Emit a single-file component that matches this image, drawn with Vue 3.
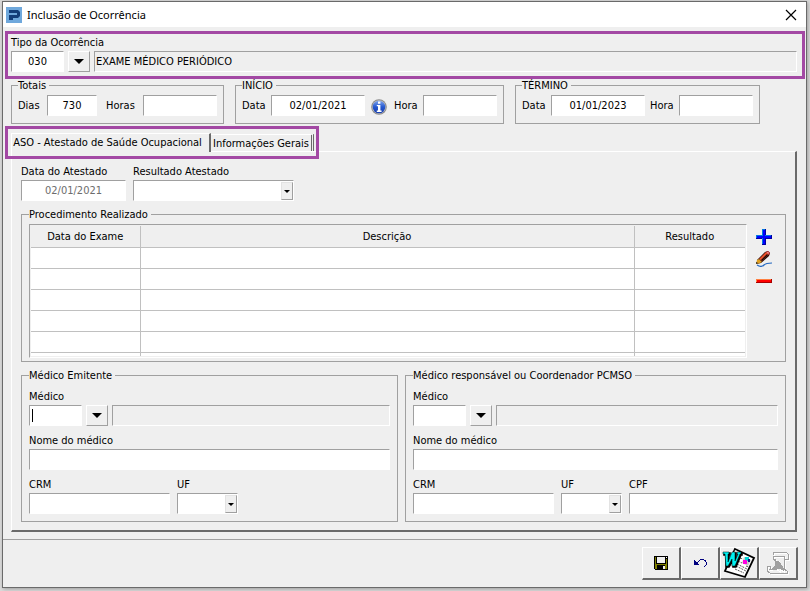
<script setup>
import { ref, onMounted } from 'vue'

const tipo = ref({ codigo: '030', descricao: 'EXAME MÉDICO PERIÓDICO' })
const totais = ref({ dias: '730', horas: '' })
const inicio = ref({ data: '02/01/2021', hora: '' })
const termino = ref({ data: '01/01/2023', hora: '' })
const dataAtestado = ref('02/01/2021')
const resultado = ref('')

const abas = ['ASO - Atestado de Saúde Ocupacional', 'Informações Gerais']
const abaAtiva = ref(0)

const medicos = ref([
  { id: 'emitente', titulo: 'Médico Emitente', cpf: false },
  { id: 'coordenador', titulo: 'Médico responsável ou Coordenador PCMSO', cpf: true }
])

const linhas = 6

onMounted(() => {
  document.getElementById('emitente-codigo')?.focus()
})
</script>

<template>
  <main class="window">
    <header class="titlebar">
      <svg class="logo" viewBox="0 0 16 16" aria-hidden="true">
        <rect width="16" height="16" fill="#6fa8dc" />
        <path d="M3 3h9l2 2v4l-2 2H7v2H3V8h8V6H3z" fill="#123c78" />
      </svg>
      <h1>Inclusão de Ocorrência</h1>
      <button type="button" class="close" aria-label="Fechar">
        <svg viewBox="0 0 12 12"><path d="M1 1l10 10M11 1L1 11" stroke="#000" stroke-width="1.2" fill="none" /></svg>
      </button>
    </header>

    <div class="content">
      <section class="tipo">
        <label for="tipo-codigo">Tipo da Ocorrência</label>
        <div class="lookup">
          <input id="tipo-codigo" v-model="tipo.codigo" class="field code center" />
          <button type="button" class="arrow" aria-label="Pesquisar tipo"></button>
          <input v-model="tipo.descricao" class="field readonly" readonly aria-label="Descrição do tipo" />
        </div>
      </section>

      <div class="periods">
        <fieldset class="period totals">
          <legend>Totais</legend>
          <label for="dias">Dias</label>
          <input id="dias" v-model="totais.dias" class="field days center" />
          <label for="horas" class="hours">Horas</label>
          <input id="horas" v-model="totais.horas" class="field hour" />
        </fieldset>
        <fieldset class="period">
          <legend>INÍCIO</legend>
          <label for="inicio-data">Data</label>
          <input id="inicio-data" v-model="inicio.data" class="field date center" />
          <button type="button" class="info" aria-label="Informações">
            <svg viewBox="0 0 16 16">
              <defs>
                <linearGradient id="infoBlue" x1="0" y1="0" x2="0" y2="1">
                  <stop offset="0" stop-color="#7fa4ee" />
                  <stop offset="0.5" stop-color="#2558cf" />
                  <stop offset="1" stop-color="#1a3fae" />
                </linearGradient>
              </defs>
              <circle cx="8" cy="8" r="7.8" fill="#8a8a8a" />
              <circle cx="8" cy="8" r="6.8" fill="#c4c4c4" />
              <circle cx="8" cy="8" r="6.3" fill="url(#infoBlue)" />
              <path d="M7 2.6h2.4v2.2H7zM5.8 6h3.6v5.6h1.2V13H5.8v-1.4H7V7.2H5.8z" fill="#fff" />
            </svg>
          </button>
          <label for="inicio-hora">Hora</label>
          <input id="inicio-hora" v-model="inicio.hora" class="field hour" />
        </fieldset>
        <fieldset class="period end">
          <legend>TÉRMINO</legend>
          <label for="termino-data">Data</label>
          <input id="termino-data" v-model="termino.data" class="field date center" />
          <label for="termino-hora" class="next">Hora</label>
          <input id="termino-hora" v-model="termino.hora" class="field hour" />
        </fieldset>
      </div>

      <div class="tabs" role="tablist">
        <button
          v-for="(aba, i) in abas"
          :key="aba"
          type="button"
          role="tab"
          class="tab"
          :class="{ active: abaAtiva === i }"
          :aria-selected="abaAtiva === i"
          @click="abaAtiva = i"
        >{{ aba }}</button>
      </div>

      <section class="panel">
        <div class="row atestado">
          <div class="cell">
            <label for="data-atestado">Data do Atestado</label>
            <input id="data-atestado" v-model="dataAtestado" class="field attest center" disabled />
          </div>
          <div class="cell">
            <label for="resultado">Resultado Atestado</label>
            <div class="combo wide">
              <select id="resultado" v-model="resultado"><option value=""></option></select>
            </div>
          </div>
        </div>

        <fieldset class="exams">
          <legend>Procedimento Realizado</legend>
          <div class="grid">
            <table>
              <thead>
                <tr>
                  <th class="col-date">Data do Exame</th>
                  <th>Descrição</th>
                  <th class="col-result">Resultado</th>
                </tr>
              </thead>
              <tbody>
                <tr v-for="n in linhas" :key="n" :class="{ partial: n === linhas }">
                  <td></td>
                  <td></td>
                  <td></td>
                </tr>
              </tbody>
            </table>
          </div>
          <div class="actions">
            <button type="button" aria-label="Adicionar">
              <svg viewBox="0 0 16 16" shape-rendering="crispEdges">
                <path d="M6 0h4v6h6v4h-6v6H6v-6H0V6h6z" fill="#0000a0" />
                <path d="M6 0h3v6h6v3H9v6H6V9H0V6h6z" fill="#0078e0" />
                <path d="M7 1h2v6h6v2H9v6H7V9H1V7h6z" fill="#0000ff" />
              </svg>
            </button>
            <button type="button" aria-label="Editar">
              <svg viewBox="0 0 16 16">
                <path d="M1 9L9 1l3-1 2 2-1 3-8 7-4 1z" fill="#2a0805" />
                <path d="M3 8l7-7 2 0 1 2-7 7z" fill="#e8502c" />
                <path d="M5 9l6-6 1 1-6 6z" fill="#1c0a08" />
                <path d="M10 1l2-1 2 2-1 2z" fill="#c42c34" />
                <path d="M11 1l1 0 1 1-1 1z" fill="#f7b3b0" />
                <path d="M0 13l1-4 2-1 3 3-2 1z" fill="#e0a020" />
                <path d="M0 13v-2l2 1z" fill="#222" />
                <path d="M1 14c3 2 5 2 7 0s4-2 8-2" stroke="#2468c0" stroke-width="1.2" fill="none" />
              </svg>
            </button>
            <button type="button" aria-label="Remover">
              <svg viewBox="0 0 16 16" shape-rendering="crispEdges">
                <path d="M0 6h16v4H0z" fill="#a80000" />
                <path d="M0 6h15v3H0z" fill="#ff8040" />
                <path d="M1 7h14v2H1z" fill="#ff0000" />
              </svg>
            </button>
          </div>
        </fieldset>

        <div class="doctors">
          <fieldset v-for="m in medicos" :key="m.id" class="doctor">
            <legend>{{ m.titulo }}</legend>
            <div class="cell">
              <label :for="m.id + '-codigo'">Médico</label>
              <div class="lookup">
                <input :id="m.id + '-codigo'" class="field code" />
                <button type="button" class="arrow" aria-label="Pesquisar médico"></button>
                <input class="field readonly" readonly aria-label="Médico selecionado" />
              </div>
            </div>
            <div class="cell">
              <label :for="m.id + '-nome'">Nome do médico</label>
              <input :id="m.id + '-nome'" class="field" />
            </div>
            <div class="row">
              <div class="cell">
                <label :for="m.id + '-crm'">CRM</label>
                <input :id="m.id + '-crm'" class="field crm" />
              </div>
              <div class="cell">
                <label :for="m.id + '-uf'">UF</label>
                <div class="combo">
                  <select :id="m.id + '-uf'"><option value=""></option></select>
                </div>
              </div>
              <div v-if="m.cpf" class="cell grow">
                <label :for="m.id + '-cpf'">CPF</label>
                <input :id="m.id + '-cpf'" class="field" />
              </div>
            </div>
          </fieldset>
        </div>
      </section>
    </div>

    <footer class="toolbar">
      <button type="button" aria-label="Salvar">
        <svg width="14" height="14" viewBox="0 0 14 14" shape-rendering="crispEdges">
          <path d="M0 0h14v14H1l-1-1z" fill="#000" />
          <path d="M1 1h1v7h10V3h1v10H1z" fill="#808000" />
          <path d="M3 1h8v6H3z" fill="#efefef" />
          <path d="M12 1h1v1h-1z" fill="#fff" />
          <path d="M3 9h8v5H3z" fill="#000" />
          <path d="M9 10h2v3H9z" fill="#efefef" />
        </svg>
      </button>
      <button type="button" aria-label="Desfazer">
        <svg width="14" height="14" viewBox="0 0 14 14" shape-rendering="crispEdges">
          <path d="M1 4h1v1h1v1h1v1h1v1h1v1H1z" fill="#000080" />
          <path d="M4 6h1V5h1V4h1V3h4v1h2v2h1v3h-1v1h-1v1h-1v-1h1V9h1V6h-1V5h-1V4H7v1H6v1H5v1H4z" fill="#000080" />
        </svg>
      </button>
      <button type="button" aria-label="Gerar documento">
        <svg width="34" height="32" viewBox="0 0 34 32">
          <path d="M13 2l19 9-9 19-20-6z" fill="#fff" stroke="#000" stroke-width="1.8" />
          <path d="M13 3l7 4-6 14-7-2z" fill="#d8d8d8" />
          <path d="M18 11l3 1M16 14l4 2M15 17l10 5M14 19l10 5M13 22l9 4M24 19l3 1" stroke="#555" stroke-width="1" stroke-dasharray="2 1" />
          <path d="M22 10l7 3-3 6-6-3z" fill="#c8c8c8" />
          <path d="M23 10h4v4h-4z" fill="#00d5d5" />
          <path d="M21 13h4v4h-4z" fill="#ff00e0" />
          <path d="M26 12h2v3h-2z" fill="#101080" />
          <path d="M2 6h6v2H7v7l4-9h3v9l3-7h-1V6h4v2h-1l-5 12h-3v-7l-4 7H4V8H2z" fill="#000" stroke="#000" stroke-width="1.6" />
          <path d="M1 5h6v2H6v8l4-10h3v9l3-7h-1V5h4v2h-1l-5 12h-3v-7l-4 7H4L3 7H1z" fill="#00f0f0" stroke="#000" stroke-width="0.5" />
        </svg>
      </button>
      <button type="button" aria-label="Imprimir" disabled>
        <svg width="24" height="24" viewBox="0 0 24 24" shape-rendering="crispEdges">
          <g id="scroll" fill="none" stroke="#fff" stroke-width="1" transform="translate(1 1)">
            <path d="M7 4V2l2-1h11l2 2v5h-4V5H7v3h3l-1 2v5M18 8v10l3 2v2H4l-3-2v-5h3l1 3H3M8 15l4-5v3l5 4v3l-4-3v3l-5-4z" />
          </g>
          <g fill="none" stroke="#a0a0a0" stroke-width="1">
            <path d="M7 4V2l2-1h11l2 2v5h-4V5H7v3h3l-1 2v5M18 8v10l3 2v2H4l-3-2v-5h3l1 3H3" />
            <path d="M9 10l4 1 4 6v2l-4-2-4 2-3-1 4-3z" fill="#a0a0a0" />
          </g>
        </svg>
      </button>
    </footer>
  </main>
</template>

<style>
body {
  margin: 0;
  background: #dcdcdc;
}
</style>

<style scoped>
*,
*::before,
*::after {
  box-sizing: border-box;
}

.window {
  margin: 1px 3px 3px 2px;
  border: 1px solid #6a6a6a;
  background: #efefef;
  box-shadow: 1px 1px 4px #999;
  color: #000;
  font: 11px "DejaVu Sans Condensed", "DejaVu Sans", sans-serif;
}

input,
select,
button {
  margin: 0;
  padding: 0;
  border: 0;
  border-radius: 0;
  background: none;
  color: inherit;
  font: inherit;
  outline: none;
}

svg {
  display: block;
}

label {
  line-height: 17px;
  white-space: nowrap;
}

/* title bar */
.titlebar {
  display: flex;
  align-items: center;
  gap: 5px;
  height: 25px;
  padding: 0 9px 0 3px;
  background: #fff;
}

.logo {
  width: 16px;
  height: 16px;
}

.titlebar h1 {
  flex: 1;
  margin: 0;
  font: 11px "Noto Sans", sans-serif;
}

.close svg {
  width: 12px;
  height: 12px;
}

.content {
  padding: 4px 9px 7px 8px;
}

/* fields */
.field {
  width: 100%;
  height: 21px;
  min-width: 0;
  padding: 0 1px;
  border: 1px solid #a0a0a0;
  border-right-color: #fff;
  border-bottom-color: #fff;
  background: #fff;
}

.field.readonly {
  flex: 1;
  background: #efefef;
}

.field:disabled {
  color: #6d6d6d;
}

.center {
  text-align: center;
}

.code {
  width: 53px;
}

.code:not(.center):focus {
  background: linear-gradient(#000, #000) 2px 3px / 1px 13px no-repeat #fff;
  caret-color: transparent;
}

.days {
  width: 50px;
}

.date {
  width: 94px;
}

.hour {
  width: 74px;
}

.attest {
  width: 105px;
}

.crm {
  width: 141px;
}

.lookup {
  display: flex;
  gap: 4px;
}

.arrow {
  display: flex;
  align-items: center;
  justify-content: center;
  width: 22px;
  height: 21px;
  border: 1px solid #fff;
  border-right-color: #a0a0a0;
  border-bottom-color: #a0a0a0;
}

.arrow::after {
  content: "";
  border: 5px solid transparent;
  border-top-color: #000;
  border-bottom: 0;
}

.combo {
  position: relative;
  width: 61px;
  height: 21px;
  border: 1px solid #a0a0a0;
  border-right-color: #fff;
  border-bottom-color: #fff;
  background: #fff;
}

.combo.wide {
  width: 161px;
}

.combo select {
  display: block;
  width: 100%;
  height: 100%;
  appearance: none;
}

.combo::before {
  content: "";
  position: absolute;
  top: 1px;
  right: 0;
  bottom: 0;
  width: 12px;
  border: 1px solid #e3e3e3;
  border-right-color: #a0a0a0;
  border-bottom-color: #a0a0a0;
  background: #efefef;
  pointer-events: none;
}

.combo::after {
  content: "";
  position: absolute;
  top: 9px;
  right: 3px;
  border: 3px solid transparent;
  border-top-color: #000;
  border-bottom: 0;
  pointer-events: none;
}

/* occurrence type */
.tipo {
  display: flex;
  flex-direction: column;
  margin: 0 -8px 6px -6px;
  padding: 0 5px 4px 3px;
  border: 3px solid #a349a4;
}

/* groups */
fieldset {
  min-width: 0;
  margin: 0;
  border: 1px solid #a0a0a0;
}

legend {
  height: 1px;
  padding: 0 3px 0 0;
  line-height: 1px;
  white-space: nowrap;
}

.periods {
  display: flex;
  gap: 11px;
}

.period {
  display: flex;
  align-items: center;
  padding: 9px 6px 7px;
}

.period label {
  flex: none;
  width: 29px;
}

.period .hours {
  width: 37px;
  margin-left: 9px;
}

.period .next {
  margin-left: 5px;
}

.info {
  margin: 2px 7px 0 6px;
}

.info svg {
  width: 16px;
  height: 16px;
}

/* tabs */
.tabs {
  position: relative;
  display: flex;
  height: 18px;
  margin-top: 9px;
}

.tabs::after {
  content: "";
  position: absolute;
  top: -7px;
  left: -6px;
  width: 314px;
  height: 33px;
  border: 3px solid #a349a4;
  pointer-events: none;
}

.tab {
  width: 103px;
  margin-top: 1px;
  border-right: 3px double #6a6a6a;
  border-top: 1px solid #fff;
  white-space: nowrap;
}

.tab.active {
  width: 200px;
  margin: 0 0 -1px;
  padding: 0 6px 2px 0;
  border-right: 2px solid #6a6a6a;
  border-left: 1px solid #fff;
  background: #efefef;
}

.panel {
  display: flex;
  flex-direction: column;
  padding: 11px 8px 8px 9px;
  border: 1px solid #fff;
  border-right: 2px solid #6a6a6a;
  border-bottom: 2px solid #6a6a6a;
}

.row {
  display: flex;
  gap: 7px;
}

.cell {
  display: flex;
  flex-direction: column;
}

.cell.grow {
  flex: 1;
  min-width: 0;
}

/* exams */
.exams {
  display: flex;
  margin: 13px 1px 0 0;
  padding: 9px 13px 3px 7px;
}

.grid {
  flex: 1;
  padding: 1px;
  border: 1px solid #a0a0a0;
  border-right-color: #fff;
  border-bottom-color: #fff;
}

table {
  width: 100%;
  border-collapse: collapse;
  table-layout: fixed;
  background: #fff;
}

th {
  height: 21px;
  padding: 0;
  background: #efefef;
  font-weight: normal;
}

td {
  height: 21px;
  padding: 0;
}

th,
td {
  border-right: 1px solid #c0c0c0;
  border-bottom: 1px solid #c0c0c0;
}

th:last-child,
td:last-child {
  border-right: 0;
}

.partial td {
  height: 4px;
  border-bottom: 0;
}

.col-date {
  width: 109px;
}

.col-result {
  width: 111px;
}

.actions {
  display: flex;
  flex-direction: column;
  gap: 6px;
  margin: 5px 0 0 9px;
}

.actions svg {
  width: 16px;
  height: 16px;
}

/* doctors */
.doctors {
  display: grid;
  grid-template-columns: 377fr 381fr;
  gap: 7px;
  margin: 13px 1px 0 0;
}

.doctor {
  display: flex;
  flex-direction: column;
  gap: 6px;
  padding: 12px 7px 7px;
}

/* toolbar */
.toolbar {
  display: flex;
  justify-content: flex-end;
  margin-right: 8px;
  padding: 7px 0;
  border-top: 1px solid #a0a0a0;
}

.toolbar button {
  display: flex;
  align-items: center;
  justify-content: center;
  width: 39px;
  height: 33px;
  border: 1px solid #fff;
  border-right: 2px solid #6a6a6a;
  border-bottom: 2px solid #6a6a6a;
}
</style>
